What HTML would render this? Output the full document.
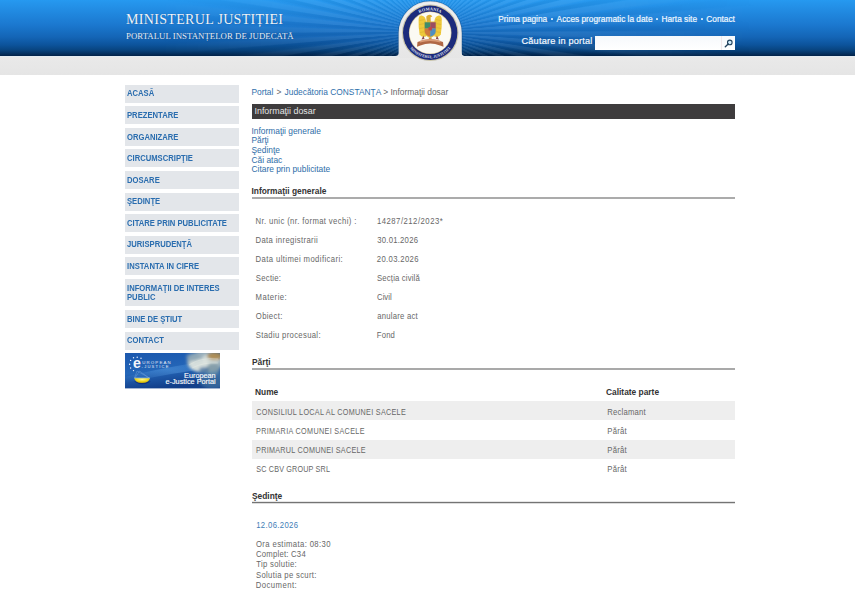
<!DOCTYPE html>
<html><head><meta charset="utf-8">
<style>
html,body{margin:0;padding:0;background:#fff;}
body{width:855px;height:598px;overflow:hidden;position:relative;font-family:"Liberation Sans",sans-serif;}
.abs{position:absolute;white-space:nowrap;}
#hdr{position:absolute;left:0;top:0;width:855px;height:56px;
 background:linear-gradient(to bottom,#2699f0 0px,#2189e0 12px,#1b78cf 25px,#1465b6 37px,#0c539b 45px,#08447f 50px,#053465 53px,#02254d 55.5px,#02234a 56px);}
#rays{position:absolute;left:0;top:0;width:855px;height:56px;
 background:repeating-conic-gradient(from 0deg at 430px 32px, rgba(255,255,255,0.065) 0deg 1.6deg, rgba(255,255,255,0.015) 2.2deg, rgba(0,0,0,0.035) 3deg 4deg, rgba(255,255,255,0.065) 4.5deg);
 -webkit-mask-image:linear-gradient(to right,rgba(0,0,0,0) 150px,#000 330px,#000 560px,rgba(0,0,0,0) 760px);}
#line{position:absolute;left:0;top:56px;width:855px;height:1px;background:#e4ecf2;}
#band{position:absolute;left:0;top:57px;width:855px;height:18px;background:linear-gradient(#e9e9e9,#e5e5e5);}
.t1{left:126px;top:12.3px;font-family:"Liberation Serif",serif;font-size:14px;color:#eef4fb;letter-spacing:0.33px;text-shadow:0 0 1px rgba(0,40,90,.5);}
.t2{left:126px;top:31px;font-family:"Liberation Serif",serif;font-size:8.8px;color:#e6eef8;letter-spacing:0.02px;text-shadow:0 0 1px rgba(0,40,90,.5);}
.toplinks{top:13.8px;font-size:8.3px;color:#eef7ff;-webkit-text-stroke:0.2px #eef7ff;}
.dot{position:absolute;top:17.6px;width:2.4px;height:2.3px;background:#d8ecfb;border-radius:0.4px;}
.srch{left:521.5px;top:35.6px;font-size:9.2px;letter-spacing:0.18px;color:#f2f8ff;-webkit-text-stroke:0.2px #f2f8ff;}
#sbox{position:absolute;left:595px;top:36px;width:140px;height:13.5px;background:linear-gradient(#f6f9fc,#ffffff);}
#sdiv{position:absolute;left:721px;top:36px;width:1px;height:13.5px;background:#f1e8ea;}
/* nav */
.nav{position:absolute;left:125px;width:113.6px;background:#e3e6ea;}
.nav span{position:absolute;left:1.8px;font-size:8.2px;font-weight:bold;color:#2a6daf;line-height:9.55px;white-space:nowrap;transform:scaleX(0.935);transform-origin:0 0;}
/* content */
.bc{left:251.5px;top:87px;font-size:8.4px;color:#666;}
.bc a{color:#2f6fab;text-decoration:none;}
#bar{position:absolute;left:252px;top:103.5px;width:483px;height:15.5px;background:#3e3c3d;}
.bart{left:254.5px;top:106.3px;font-size:8.9px;color:#e4e4e4;}
.links{left:251.5px;top:126.8px;font-size:8.4px;line-height:9.62px;color:#2e6da8;}
.h{font-size:8.4px;font-weight:bold;color:#333;}
.uline{position:absolute;left:252px;width:483px;height:1.4px;background:#8d8d8d;}
.lab{font-size:8.5px;color:#5e5e5e;}
.band{position:absolute;left:252px;width:483px;height:18.9px;background:#eeeeee;}
.date{font-size:8.5px;color:#3d7ab3;}
</style></head><body>
<div id="hdr"></div>
<div id="rays"></div>
<div id="line"></div>
<div id="band"></div>

<div class="abs t1">MINISTERUL JUSTIȚIEI</div>
<div class="abs t2">PORTALUL INSTANȚELOR DE JUDECATĂ</div>

<!-- logo -->
<svg style="position:absolute;left:390px;top:0px" width="80" height="66" viewBox="390 0 80 66">
 <defs>
  <linearGradient id="tabg" x1="0" y1="0" x2="0" y2="1"><stop offset="0" stop-color="#efefef"/><stop offset="1" stop-color="#e6e6e6"/></linearGradient>
 </defs>
 <path d="M397.9,56 L397.9,32.8 A32.3,32.3 0 0 1 462.5,32.8 L462.5,56 Z" fill="#0a3d78" opacity="0.45"/>
 <path d="M398.6,57 L398.6,32.8 A31.6,31.6 0 0 1 461.8,32.8 L461.8,57 Z" fill="#d9dcdf"/>
 <path d="M399.3,58 L399.3,32.8 A30.9,30.9 0 0 1 461.1,32.8 L461.1,58 Z" fill="url(#tabg)"/>
 <path d="M461,51.5 Q461.3,56 465.5,56.2 L461,56.2 Z" fill="#e7e7e7"/>
 <path d="M399.4,51.5 Q399.1,56 394.9,56.2 L399.4,56.2 Z" fill="#e7e7e7"/>
 <circle cx="430.2" cy="32.8" r="28.3" fill="#a9a58c" opacity="0.55"/>
 <circle cx="430.2" cy="32.8" r="27.8" fill="#d6cca4"/>
 <circle cx="430.2" cy="32.8" r="27.2" fill="#1c2b7c"/>
 <circle cx="430.2" cy="32.8" r="21.3" fill="#d4c596"/>
 <circle cx="430.2" cy="32.8" r="20.7" fill="#fbfaf3"/>
 <path id="arcT" d="M407.7,32.8 A22.5,22.5 0 0 1 452.7,32.8" fill="none"/>
 <text font-family="Liberation Serif" font-size="4.3" font-weight="bold" fill="#e6e9f4" letter-spacing="0.15"><textPath href="#arcT" startOffset="50%" text-anchor="middle">ROMANIA</textPath></text>
 <path id="arcB" d="M404.8,32.8 A25.4,25.4 0 0 0 455.6,32.8" fill="none"/>
 <text font-family="Liberation Serif" font-size="3.9" font-weight="bold" fill="#e6e9f4" letter-spacing="0.05"><textPath href="#arcB" startOffset="50%" text-anchor="middle">MINISTERUL JUSTITIEI</textPath></text>
 <!-- wings -->
 <path d="M418.6,19 Q419,15.2 421.8,15.6 Q425.5,16.5 426,21 L426,36.5 Q421.5,38 419.6,34.5 Q418.3,27 418.6,19 Z" fill="#eec93a"/>
 <path d="M441.8,19 Q441.4,15.2 438.6,15.6 Q434.9,16.5 434.4,21 L434.4,36.5 Q438.9,38 440.8,34.5 Q442.1,27 441.8,19 Z" fill="#eec93a"/>
 <path d="M419.5,20.5 L424.5,19.5 M419.3,24.5 L425,23.5 M419.3,28.5 L425,27.5 M419.8,32.5 L425,31.5 M440.9,20.5 L435.9,19.5 M441.1,24.5 L435.4,23.5 M441.1,28.5 L435.4,27.5 M440.6,32.5 L435.4,31.5" stroke="#cfa62e" stroke-width="0.45"/>
 <path d="M426.3,16.5 Q428.2,14 431,15 L432.3,16.6 L430.6,17.2 L430.8,22 L426.6,22 Z" fill="#dcae35"/>
 <path d="M424,21.6 L436.4,21.6 L436.4,31 Q436.4,36.2 430.2,37.8 Q424,36.2 424,31 Z" fill="#e0b93a"/>
 <path d="M424.7,22.3 L430.2,22.3 L430.2,28.6 L424.7,28.6 Z" fill="#3f8c6a"/>
 <path d="M430.2,22.3 L435.7,22.3 L435.7,28.6 L430.2,28.6 Z" fill="#9a4e62"/>
 <path d="M424.7,28.6 L430.2,28.6 L430.2,36.8 Q424.7,35.2 424.7,31 Z" fill="#cf7a3c"/>
 <path d="M430.2,28.6 L435.7,28.6 L435.7,31 Q435.7,35.2 430.2,36.8 Z" fill="#4f8fc0"/>
 <rect x="428.5" y="27" width="3.4" height="3.4" fill="#c04848"/>
 <path d="M423.5,35.5 L421.5,39.5 L424.5,39 Z M436.9,35.5 L438.9,39.5 L435.9,39 Z" fill="#8a4a50"/>
 <path d="M428.5,37.5 L431.9,37.5 L431,40.5 L429.4,40.5 Z" fill="#c79a3a"/>
 <path d="M417.5,42 Q430.2,36.5 443,42 L443.5,46.8 L440,45.6 Q430.2,41.5 420.4,45.6 L417,46.8 Z" fill="#b06844"/>
 <path d="M420,40.8 Q430.2,37.2 440.4,40.8 L440.4,42.6 Q430.2,39.3 420,42.6 Z" fill="#d99a74"/>
</svg>

<div class="abs toplinks" style="left:498.3px">Prima pagina</div><div class="dot" style="left:550.8px"></div><div class="abs toplinks" style="left:556.6px">Acces programatic la date</div><div class="dot" style="left:655.8px"></div><div class="abs toplinks" style="left:661.5px">Harta site</div><div class="dot" style="left:700.6px"></div><div class="abs toplinks" style="left:706.3px">Contact</div>
<div class="abs srch">Căutare in portal</div>
<div id="sbox"></div>
<div id="sdiv"></div>
<svg style="position:absolute;left:722px;top:37px" width="13" height="12" viewBox="0 0 13 12">
 <circle cx="7.8" cy="5.4" r="2.3" fill="#cfe9f8" stroke="#24445e" stroke-width="1.1"/>
 <line x1="6.2" y1="7" x2="3.3" y2="9.7" stroke="#24445e" stroke-width="1.4" stroke-linecap="round"/>
</svg>

<!-- nav -->
<div class="nav" style="top:84.6px;height:18.05px"><span style="top:4.8px">ACASĂ</span></div>
<div class="nav" style="top:106.2px;height:18.05px"><span style="top:4.8px">PREZENTARE</span></div>
<div class="nav" style="top:127.8px;height:18.05px"><span style="top:4.8px">ORGANIZARE</span></div>
<div class="nav" style="top:149.4px;height:18.05px"><span style="top:4.8px">CIRCUMSCRIPŢIE</span></div>
<div class="nav" style="top:171.0px;height:18.05px"><span style="top:4.8px">DOSARE</span></div>
<div class="nav" style="top:192.5px;height:18.05px"><span style="top:4.8px">ŞEDINŢE</span></div>
<div class="nav" style="top:214.1px;height:18.05px"><span style="top:4.8px">CITARE PRIN PUBLICITATE</span></div>
<div class="nav" style="top:235.7px;height:18.05px"><span style="top:4.8px">JURISPRUDENŢĂ</span></div>
<div class="nav" style="top:257.3px;height:18.05px"><span style="top:4.8px">INSTANTA IN CIFRE</span></div>
<div class="nav" style="top:278.9px;height:27.6px"><span style="top:4.8px">INFORMAŢII DE INTERES<br>PUBLIC</span></div>
<div class="nav" style="top:310.1px;height:18.05px"><span style="top:4.8px">BINE DE ŞTIUT</span></div>
<div class="nav" style="top:331.7px;height:18.05px"><span style="top:4.8px">CONTACT</span></div>

<!-- e-justice banner -->
<svg style="position:absolute;left:125px;top:353.3px" width="95" height="35.4" viewBox="0 0 95 35.4">
 <defs>
  <linearGradient id="bj" x1="0" y1="0" x2="0.3" y2="1">
   <stop offset="0" stop-color="#1c58ad"/><stop offset="0.55" stop-color="#2466b8"/><stop offset="1" stop-color="#123f8a"/>
  </linearGradient>
  <linearGradient id="streak" x1="0" y1="1" x2="1" y2="0">
   <stop offset="0" stop-color="#5aa0e8" stop-opacity="0"/><stop offset="0.5" stop-color="#6ab0f0" stop-opacity="0.35"/><stop offset="1" stop-color="#6ab0f0" stop-opacity="0"/>
  </linearGradient>
  <radialGradient id="ph" cx="0.78" cy="0.2" r="0.42">
   <stop offset="0" stop-color="#d6ddd8"/><stop offset="0.45" stop-color="#9fb4bd" stop-opacity="0.85"/><stop offset="1" stop-color="#2a66b0" stop-opacity="0"/>
  </radialGradient>
  <radialGradient id="gold" cx="0.95" cy="0.1" r="0.3">
   <stop offset="0" stop-color="#a88a48"/><stop offset="1" stop-color="#a88a48" stop-opacity="0"/>
  </radialGradient>
  <radialGradient id="bowl" cx="0.5" cy="0.3" r="0.6">
   <stop offset="0" stop-color="#fff890"/><stop offset="0.6" stop-color="#f0d820"/><stop offset="1" stop-color="#c8b010"/>
  </radialGradient>
 </defs>
 <rect width="95" height="35.4" fill="url(#bj)"/>
 <path d="M0,24 Q40,14 95,6 L95,14 Q45,20 0,30 Z" fill="url(#streak)"/>
 <filter id="bl1" filterUnits="userSpaceOnUse" x="30" y="-15" width="80" height="50"><feGaussianBlur stdDeviation="1.6"/></filter>
 <g filter="url(#bl1)">
  <ellipse cx="80" cy="9" rx="18" ry="11" fill="#a9b9bd" opacity="0.9"/>
  <ellipse cx="74" cy="12" rx="10" ry="6" fill="#dfe6e2" opacity="0.85"/>
  <ellipse cx="86" cy="6" rx="9" ry="5" fill="#e8ece4" opacity="0.7"/>
  <ellipse cx="90" cy="3" rx="8" ry="4" fill="#a8864a" opacity="0.9"/>
  <ellipse cx="68" cy="4" rx="7" ry="4" fill="#8aa4b4" opacity="0.7"/>
  <ellipse cx="88" cy="16" rx="7" ry="6" fill="#7f9aa6" opacity="0.8"/>
  <ellipse cx="79" cy="17" rx="5" ry="3" fill="#3a6a9a" opacity="0.7"/>
 </g>
 <path d="M64,12 Q76,4 93,6 M67,15 Q79,9 93,10" stroke="#f0f2ea" stroke-width="0.6" fill="none" opacity="0.55"/>
 <g fill="#f4f6ff">
  <circle cx="8.5" cy="4.7" r=".7"/><circle cx="12.2" cy="4.2" r=".7"/><circle cx="16" cy="5.3" r=".7"/><circle cx="5.6" cy="7.4" r=".7"/><circle cx="4.6" cy="11.2" r=".7"/><circle cx="5.6" cy="15" r=".7"/><circle cx="8.5" cy="17.6" r=".7"/>
 </g>
 <text x="7.9" y="14.9" font-family="Liberation Sans" font-weight="bold" font-size="14.2" fill="#f4f6fa">e</text>
 <text x="17.2" y="10.9" font-family="Liberation Sans" font-size="4.4" fill="#e6ecf8" letter-spacing="1.15">UROPEAN</text>
 <text x="16.6" y="14.7" font-family="Liberation Sans" font-size="4.1" fill="#e6ecf8" letter-spacing="1.2">-JUSTICE</text>
 <path d="M12,18 L9.5,25 M12,18 L24.5,25 M14.5,18 L10,25 M14.5,18 L24,25" stroke="#8ab8e8" stroke-width=".4" opacity="0.8"/>
 <path d="M9,28.5 Q17,34 26,28.5 Z" fill="#0e2a78" opacity="0.8"/>
 <path d="M9.2,25 L25,25 Q24,30 17,30 Q10,30 9.2,25 Z" fill="url(#bowl)"/>
 <path d="M9.2,25 L25,25" stroke="#90c0f0" stroke-width=".7"/>
 <ellipse cx="88" cy="27" rx="14" ry="9" fill="#5f93b0" opacity="0.45" filter="url(#bl1)"/>
 <text x="90.7" y="24.7" font-family="Liberation Sans" font-size="7.3" fill="#fafafa" stroke="#fafafa" stroke-width="0.15" text-anchor="end">European</text>
 <text x="90.7" y="31.4" font-family="Liberation Sans" font-size="7.3" fill="#fafafa" stroke="#fafafa" stroke-width="0.15" text-anchor="end">e-Justice Portal</text>
</svg>

<!-- content -->
<div class="abs bc"><a>Portal</a></div><div class="abs bc" style="left:276.6px">&gt;</div><div class="abs bc" style="left:284.6px"><a>Judecătoria CONSTANŢA</a></div><div class="abs bc" style="left:383.3px">&gt; Informaţii dosar</div>
<div id="bar"></div>
<div class="abs bart">Informaţii dosar</div>
<div class="abs links">Informaţii generale<br>Părţi<br>Şedinţe<br>Căi atac<br>Citare prin publicitate</div>

<div class="abs h" style="left:251.5px;top:186px">Informaţii generale</div>
<div class="uline" style="top:197px;height:2px;background:#ababab"></div>



<div class="abs h" style="left:252px;top:357px">Părţi</div>
<div class="uline" style="top:368px;height:2px;background:#a9a9a9"></div>

<div class="abs h" style="left:255px;top:387px">Nume</div>
<div class="abs h" style="left:606px;top:387px">Calitate parte</div>

<div class="band" style="top:401px;height:19px"></div>
<div class="band" style="top:440px;height:19px"></div>

<div class="abs h" style="left:252px;top:491px">Şedinţe</div>
<div class="uline" style="top:501px;height:3px;background:linear-gradient(#e6e6e6 0 1px,#747474 1px 2px,#dcdcdc 2px 3px)"></div>

<!--TBL-->
<svg id="tbl" style="position:absolute;left:0;top:0" width="855" height="598" font-family="Liberation Sans" font-size="8.4" fill="#676767">
<text transform="translate(255.53,224.10) scale(0.92,1)" letter-spacing="0.398">Nr. unic (nr. format vechi) :</text>
<text transform="translate(376.93,224.10) scale(0.92,1)" letter-spacing="0.542">14287/212/2023*</text>
<text transform="translate(255.53,243.10) scale(0.92,1)" letter-spacing="0.390">Data inregistrarii</text>
<text transform="translate(377.24,243.10) scale(0.92,1)" letter-spacing="0.251">30.01.2026</text>
<text transform="translate(255.53,262.00) scale(0.92,1)" letter-spacing="0.430">Data ultimei modificari:</text>
<text transform="translate(376.86,262.00) scale(0.92,1)" letter-spacing="0.357">20.03.2026</text>
<text transform="translate(255.76,281.00) scale(0.92,1)" letter-spacing="0.296">Sectie:</text>
<text transform="translate(377.06,281.00) scale(0.92,1)" letter-spacing="0.171">Secția civilă</text>
<text transform="translate(255.53,299.80) scale(0.92,1)" letter-spacing="0.515">Materie:</text>
<text transform="translate(377.06,299.80) scale(0.92,1)" letter-spacing="0.006">Civil</text>
<text transform="translate(255.76,318.60) scale(0.92,1)" letter-spacing="0.396">Obiect:</text>
<text transform="translate(377.14,318.60) scale(0.92,1)" letter-spacing="0.254">anulare act</text>
<text transform="translate(255.76,337.90) scale(0.92,1)" letter-spacing="0.349">Stadiu procesual:</text>
<text transform="translate(376.83,337.90) scale(0.92,1)" letter-spacing="0.159">Fond</text>
<text transform="translate(256.29,414.70) scale(0.86,1)" letter-spacing="0.343">CONSILIUL LOCAL AL COMUNEI SACELE</text>
<text transform="translate(607.33,414.70) scale(0.92,1)" letter-spacing="0.198">Reclamant</text>
<text transform="translate(256.07,433.80) scale(0.86,1)" letter-spacing="0.386">PRIMARIA COMUNEI SACELE</text>
<text transform="translate(607.33,433.80) scale(0.92,1)" letter-spacing="0.224">Părât</text>
<text transform="translate(256.07,453.10) scale(0.86,1)" letter-spacing="0.313">PRIMARUL COMUNEI SACELE</text>
<text transform="translate(607.33,453.10) scale(0.92,1)" letter-spacing="0.224">Părât</text>
<text transform="translate(256.29,471.90) scale(0.86,1)" letter-spacing="0.181">SC CBV GROUP SRL</text>
<text transform="translate(607.33,471.90) scale(0.92,1)" letter-spacing="0.224">Părât</text>
<text transform="translate(256.23,528.00) scale(0.92,1)" letter-spacing="0.373" fill="#3f7db6">12.06.2026</text>
<text transform="translate(255.96,547.10) scale(0.92,1)" letter-spacing="0.407">Ora estimata: 08:30</text>
<text transform="translate(255.96,557.20) scale(0.92,1)" letter-spacing="0.249">Complet: C34</text>
<text transform="translate(256.20,567.40) scale(0.92,1)" letter-spacing="0.341">Tip solutie:</text>
<text transform="translate(255.96,577.50) scale(0.92,1)" letter-spacing="0.351">Solutia pe scurt:</text>
<text transform="translate(255.73,587.60) scale(0.92,1)" letter-spacing="0.491">Document:</text>
</svg>
<!--/TBL-->
</body></html>
